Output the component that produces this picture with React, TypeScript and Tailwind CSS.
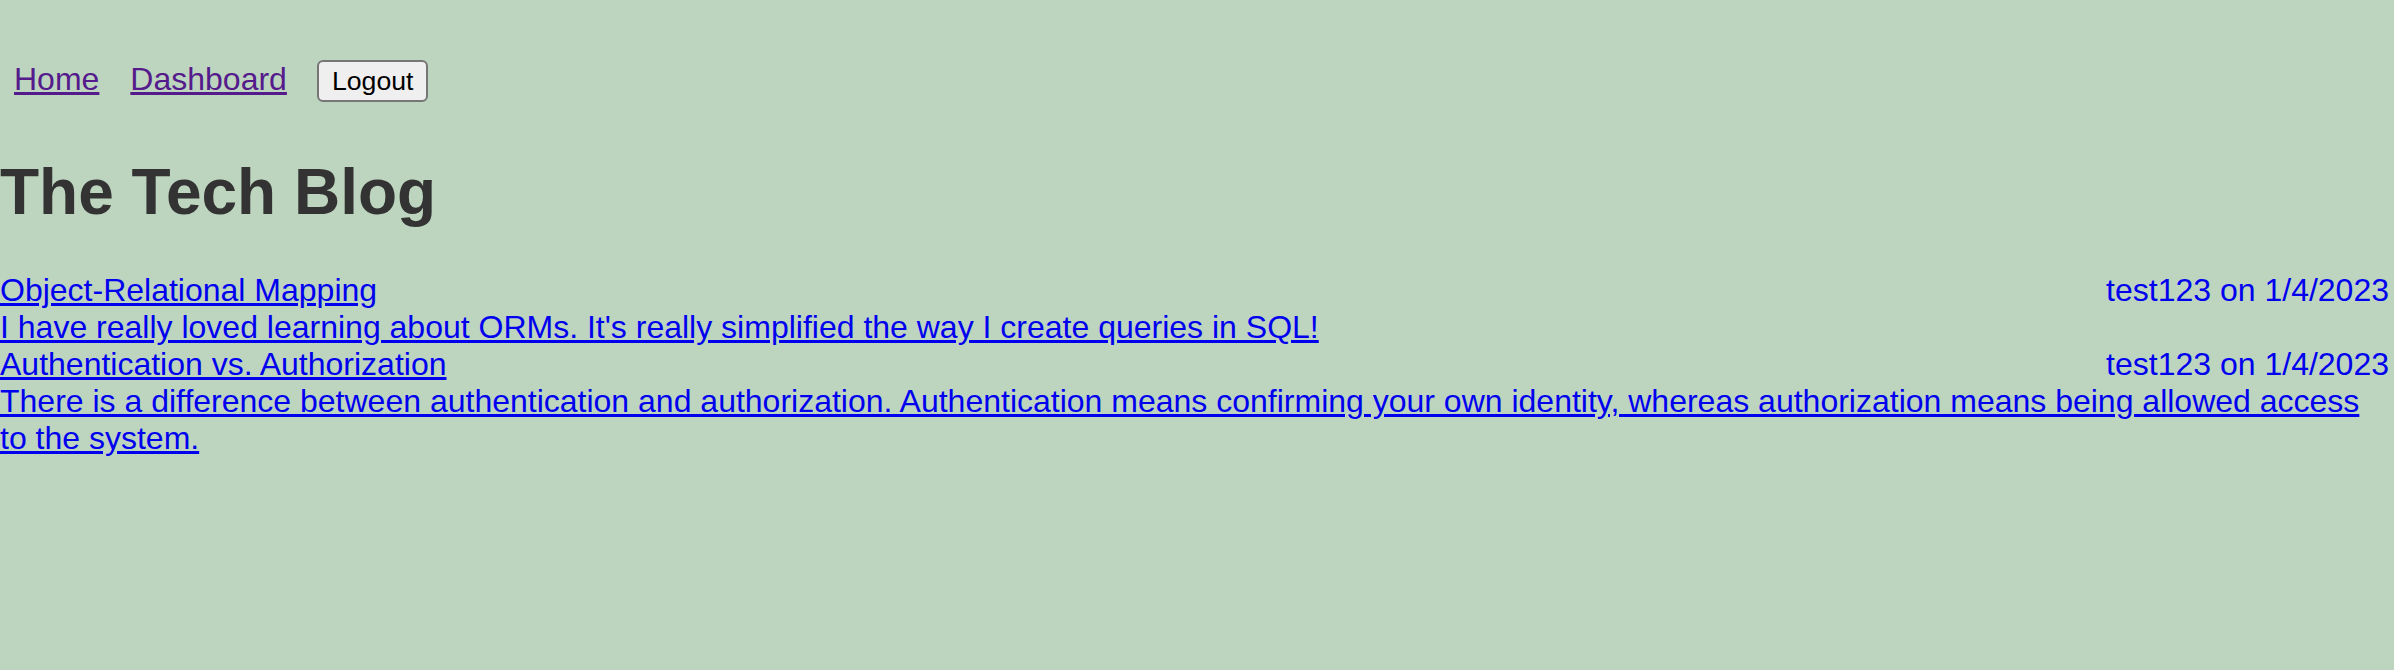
const posts = [
  {
    title: 'Object-Relational Mapping',
    user: 'test123',
    date: '1/4/2023',
    body: "I have really loved learning about ORMs. It's really simplified the way I create queries in SQL!",
  },
  {
    title: 'Authentication vs. Authorization',
    user: 'test123',
    date: '1/4/2023',
    body: 'There is a difference between authentication and authorization. Authentication means confirming your own identity, whereas authorization means being allowed access to the system.',
  },
]

const App = () => {
  return (
    <div className="min-h-screen w-full bg-[#bdd5bf] font-['Liberation_Sans',Arial,sans-serif] text-[32px] leading-[37px]">
      <header className="flex items-baseline pt-[60px] pl-[14px]">
        <a href="#" className="text-[#551a8b] underline">Home</a>
        <a href="#" className="ml-[31px] text-[#551a8b] underline">Dashboard</a>
        <button className="ml-[30px] rounded-[6px] border-2 border-[#767676] bg-[#efefef] px-[13px] py-[3.5px] text-[26.67px] leading-[30.6px] text-black">
          Logout
        </button>
      </header>

      <h1 className="mt-[54px] text-[64px] leading-[73.6px] font-bold text-[#333333]">The Tech Blog</h1>

      <main className="mt-[43px] pr-[5px]">
        {posts.map((post) => (
          <div key={post.title}>
            <div className="flex justify-between text-[#0000ee]">
              <a href="#" className="underline">{post.title}</a>
              <span>{post.user} on {post.date}</span>
            </div>
            <a href="#" className="block text-[#0000ee] underline">{post.body}</a>
          </div>
        ))}
      </main>
    </div>
  )
}

export default App
